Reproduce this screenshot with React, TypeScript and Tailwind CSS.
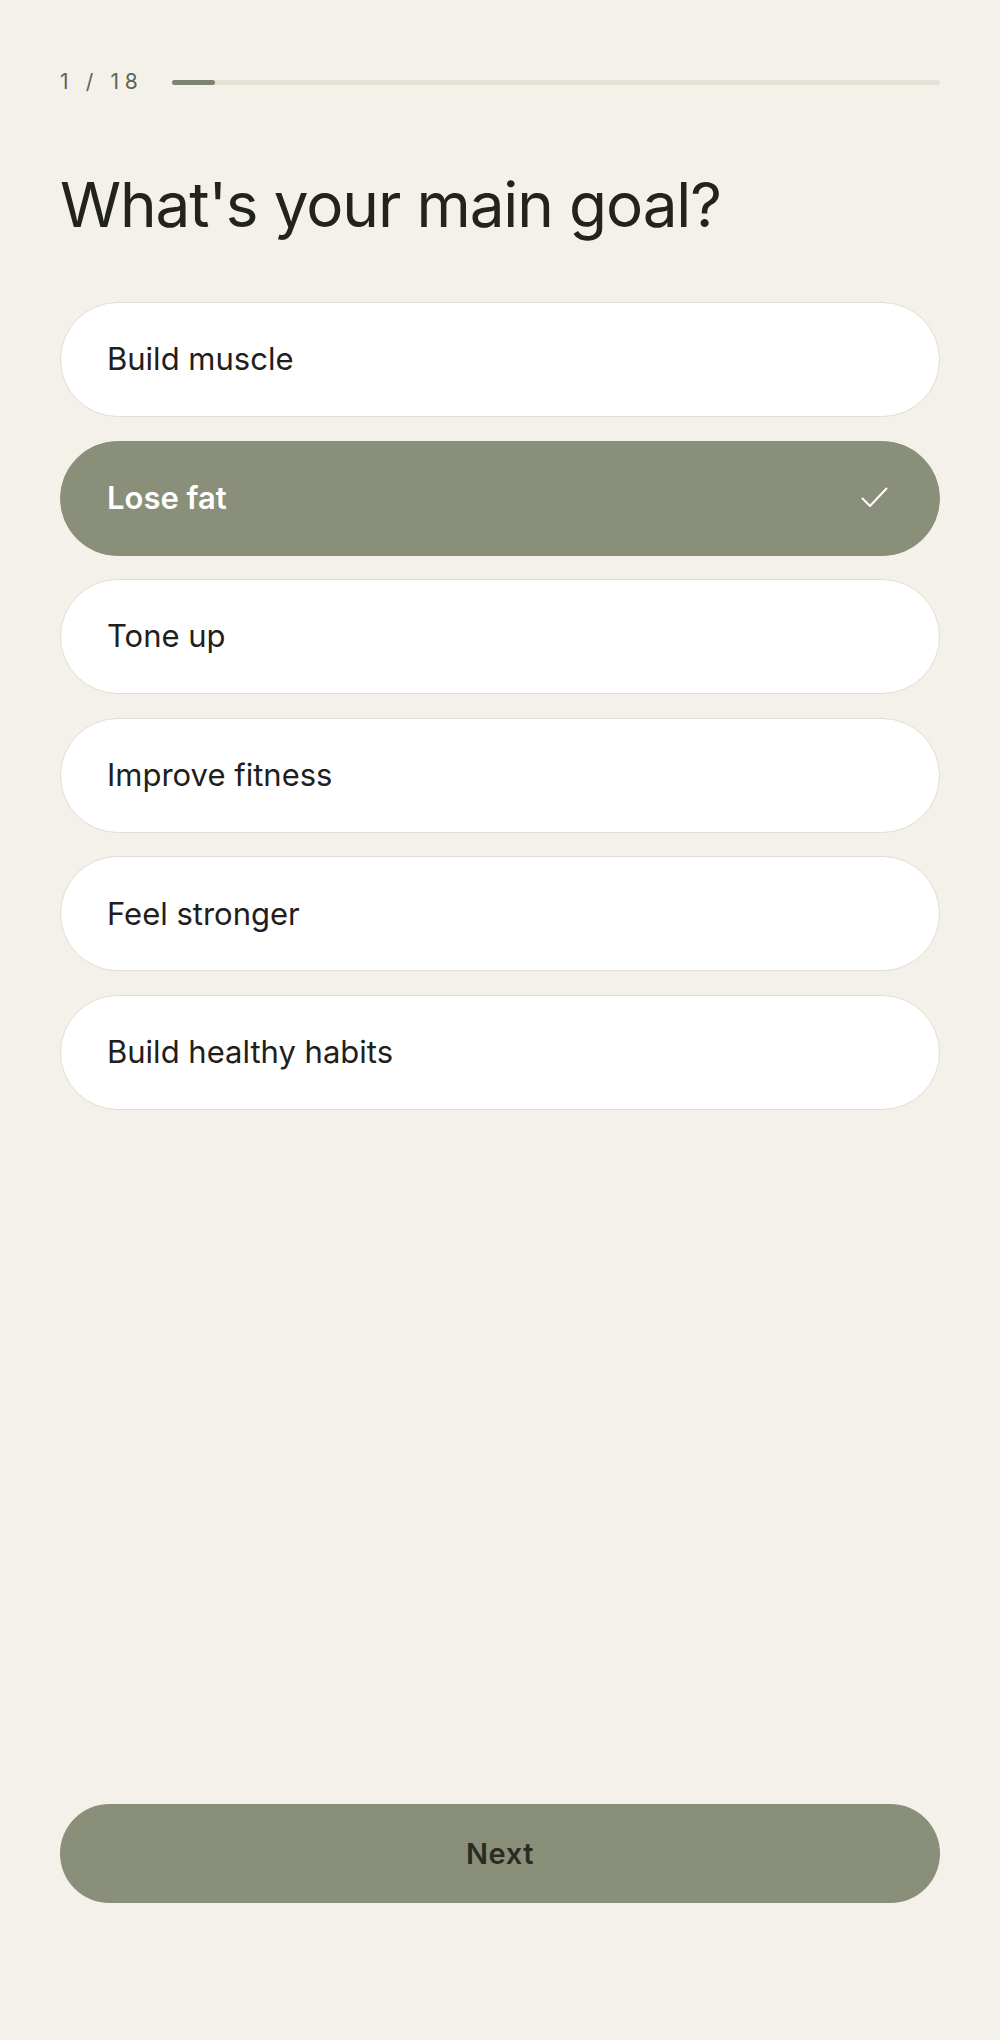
import React from "react";

const options = [
  "Build muscle",
  "Lose fat",
  "Tone up",
  "Improve fitness",
  "Feel stronger",
  "Build healthy habits",
];

export default function App() {
  const selected = "Lose fat";
  return (
    <div
      className="flex h-[2040px] w-full flex-col bg-[#f4f1ea] px-[60px]"
      style={{ fontFamily: "Inter, 'Liberation Sans', sans-serif" }}
    >
      <div className="mt-[70px] flex h-6 items-center">
        <span className="w-[112px] text-[21px] leading-6 tracking-[0.27em] text-[#5f6453]">
          1 / 18
        </span>
        <div className="relative h-[5px] flex-1 rounded-full bg-[#e6e2d8]">
          <div className="absolute left-0 top-0 h-[5px] w-[43px] rounded-full bg-[#7e8371]" />
        </div>
      </div>

      <h1 className="mt-[80px] text-[62px] font-normal leading-none tracking-[-0.018em] text-[#22231d]">
        What's your main goal?
      </h1>

      <div className="mt-[66px] flex flex-col gap-[23.6px]">
        {options.map((o) => {
          const isSel = o === selected;
          return (
            <div
              key={o}
              className={
                isSel
                  ? "flex h-[115px] items-center justify-between rounded-full border-[1.5px] border-[#8a8f79] bg-[#8a8f79] pl-[46px] pr-[51px]"
                  : "flex h-[115px] items-center justify-between rounded-full border-[1.5px] border-[#e2ddd2] bg-white pl-[46px] pr-[51px]"
              }
            >
              <span
                className={
                  isSel
                    ? "text-[31px] font-semibold text-white"
                    : "text-[31px] font-normal text-[#1f201b]"
                }
              >
                {o}
              </span>
              {isSel && (
                <svg width="27" height="22" viewBox="0 0 27 22" fill="none">
                  <polyline
                    points="1.5,11.5 9,19 25.5,1.5"
                    stroke="white"
                    strokeWidth="2"
                    strokeLinecap="round"
                    strokeLinejoin="round"
                  />
                </svg>
              )}
            </div>
          );
        })}
      </div>

      <div className="flex-1" />

      <button className="mb-[137px] flex h-[99px] w-full items-center justify-center rounded-full bg-[#8a8f79] text-[29px] font-semibold tracking-[0.02em] text-[#2a2c24]">
        Next
      </button>
    </div>
  );
}
